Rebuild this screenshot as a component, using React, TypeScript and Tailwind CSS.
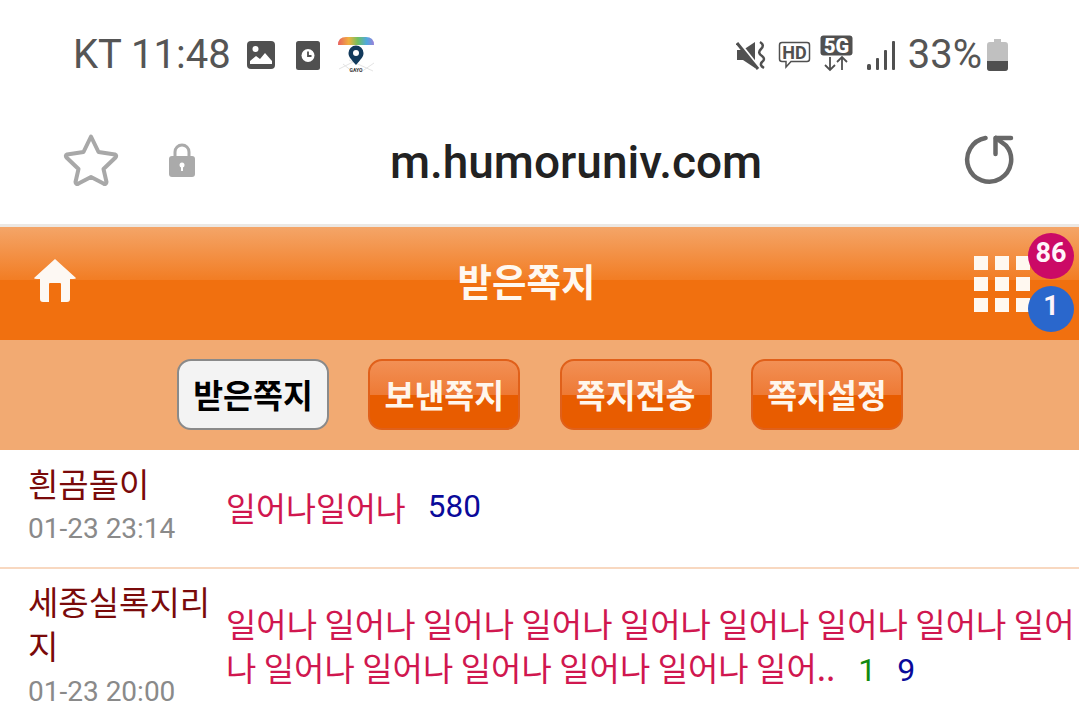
import React from 'react'

const tabs = ['받은쪽지', '보낸쪽지', '쪽지전송', '쪽지설정']

const GalleryIcon = () => (
  <svg width="30" height="30" viewBox="0 0 30 30" className="ml-[15px]">
    <rect x="1" y="1" width="28" height="28" rx="4" fill="#505050" />
    <circle cx="9.5" cy="9" r="3" fill="#fff" />
    <path d="M4 24 v-3 l6 -5 4 3 5 -6 7 8 v3 z" fill="#fff" />
  </svg>
)

const ClockIcon = () => (
  <svg width="26" height="31" viewBox="0 0 26 31" className="ml-[19px]">
    <rect x="1" y="1" width="24" height="29" rx="2.5" fill="#505050" />
    <circle cx="13" cy="15.5" r="6.5" fill="#fff" />
    <path d="M13 11.5 v4.5 h3.5" stroke="#505050" strokeWidth="1.8" fill="none" />
  </svg>
)

const GayoIcon = () => (
  <svg width="38" height="38" viewBox="0 0 38 38" className="ml-[16px]">
    <defs>
      <linearGradient id="rb" x1="0" x2="1" y1="0" y2="0">
        <stop offset="0" stopColor="#e8605f" />
        <stop offset="0.3" stopColor="#f0b040" />
        <stop offset="0.55" stopColor="#70c060" />
        <stop offset="0.8" stopColor="#50a8e0" />
        <stop offset="1" stopColor="#9a80d8" />
      </linearGradient>
    </defs>
    <path d="M1 9 Q1 1 9 1 H29 Q37 1 37 9 Z" fill="url(#rb)" />
    <path d="M2 33 L20 24 M12 24 L36 35 M6 28 L16 36 M24 36 L37 27" stroke="#e4e4e4" strokeWidth="1" fill="none" />
    <path d="M19 29 C14 23 11.5 21 11.5 17 A7.5 7.5 0 0 1 26.5 17 C26.5 21 24 23 19 29 Z" fill="#123a5c" />
    <circle cx="19" cy="17" r="3" fill="#fff" />
    <text x="19" y="36" textAnchor="middle" fontSize="5" fontWeight="700" fill="#333" fontFamily="Roboto, sans-serif">GAYO</text>
  </svg>
)

const MuteIcon = () => (
  <svg width="32" height="30" viewBox="0 0 32 30">
    <path d="M1 10 h6 l12 -8 v26 l-12 -8 h-6 z" fill="#505050" />
    <path d="M1 0 L24 29" stroke="#fff" strokeWidth="3" />
    <path d="M1 3 L22 29" stroke="#505050" strokeWidth="3" />
    <path d="M24 2 q5 3 1 7 q-4 4 1 7 q4 3 0 6 q-3 3 2 6" stroke="#505050" strokeWidth="2.5" fill="none" />
  </svg>
)

const HdIcon = () => (
  <svg width="33" height="28" viewBox="0 0 33 28" className="ml-[10px]">
    <path d="M4 1.5 H29 Q31.5 1.5 31.5 4 V18 Q31.5 20.5 29 20.5 H13 L8 26 V20.5 H4 Q1.5 20.5 1.5 18 V4 Q1.5 1.5 4 1.5 Z" fill="none" stroke="#505050" strokeWidth="1.5" />
    <text x="16.5" y="17.5" textAnchor="middle" fontSize="18" fontWeight="700" fill="#505050" fontFamily="Roboto, sans-serif">HD</text>
  </svg>
)

const FiveGIcon = () => (
  <svg width="33" height="37" viewBox="0 0 33 37" className="mb-[3px] ml-[9px]">
    <rect x="0.5" y="0.5" width="32" height="20" rx="3" fill="#505050" />
    <text x="16.5" y="17.5" textAnchor="middle" fontSize="20" fontWeight="900" fill="#fff" fontFamily="Roboto, sans-serif">5G</text>
    <path d="M10 22 V35 M5 30 L10 35 L15 30 M22 35 V22 M17 27 L22 22 L27 27" stroke="#505050" strokeWidth="1.8" fill="none" />
  </svg>
)

const SignalIcon = () => (
  <svg width="28" height="30" viewBox="0 0 28 30" className="ml-[14px]">
    <rect x="0" y="24" width="4" height="6" rx="1.5" fill="#505050" />
    <rect x="9" y="18" width="3" height="12" rx="1" fill="#505050" />
    <rect x="17" y="10" width="3" height="20" rx="1" fill="#505050" />
    <rect x="25" y="1" width="3" height="29" rx="1" fill="#505050" />
  </svg>
)

const BatteryIcon = () => (
  <svg width="21" height="32" viewBox="0 0 21 32" className="ml-[5px]">
    <path d="M7 0 h7 v3 h4 q3 0 3 3 v23 q0 3 -3 3 h-15 q-3 0 -3 -3 v-23 q0 -3 3 -3 h4 z" fill="#c0c0c0" />
    <path d="M0 22 h21 v7 q0 3 -3 3 h-15 q-3 0 -3 -3 z" fill="#505050" />
  </svg>
)

const StarIcon = () => (
  <svg width="56" height="54" viewBox="0 0 56 54">
    <path d="M28 3.5 L35.5 19 L52 21.5 C53.5 22 53.5 23.5 52.5 24.5 L40.5 36 L43.5 49 C43.5 51 42 51.5 40.5 50.5 L28 44 L15.5 50.5 C14 51.5 12.5 51 12.5 49 L15.5 36 L3.5 24.5 C2.5 23.5 2.5 22 4 21.5 L20.5 19 Z" fill="none" stroke="#a8a8a8" strokeWidth="4" strokeLinejoin="round" />
  </svg>
)

const LockIcon = () => (
  <svg width="28" height="36" viewBox="0 0 28 36" className="ml-[49px]">
    <path d="M7 16 V10 A7 7 0 0 1 21 10 V16" fill="none" stroke="#aaa" strokeWidth="3" />
    <rect x="1" y="14" width="26" height="21" rx="3" fill="#aaa" />
    <circle cx="14" cy="23" r="2.5" fill="#fff" />
    <rect x="13" y="23" width="2" height="6" fill="#fff" />
  </svg>
)

const ReloadIcon = () => (
  <svg width="52" height="52" viewBox="0 0 52 52">
    <path d="M21.5 4 A22 22 0 1 0 42 11.5 L32 4" fill="none" stroke="#686868" strokeWidth="4.5" strokeLinecap="round" strokeLinejoin="round" />
    <path d="M31.5 20 V4 H47" fill="none" stroke="#686868" strokeWidth="4.5" strokeLinecap="round" strokeLinejoin="round" />
  </svg>
)

const HomeIcon = () => (
  <svg width="42" height="44" viewBox="0 0 42 44" className="mb-[2px]">
    <path d="M21 0 L42 19 Q42 20 39 20 H36 V40 Q36 43 33 43 H27 V25 Q27 24 26 24 H16 Q15 24 15 25 V43 H9 Q6 43 6 40 V20 H3 Q0 20 0 19 Z" fill="#fdf8f3" />
  </svg>
)

const Badge = ({ value, className }: { value: string; className: string }) => (
  <div className={`absolute right-[5px] flex h-[46px] w-[46px] items-center justify-center rounded-full pb-[6px] font-['Roboto',sans-serif] text-[27px] leading-none font-bold text-[#fff4fa] ${className}`}>
    {value}
  </div>
)

const Tab = ({ label, active }: { label: string; active: boolean }) => (
  <div
    className={
      active
        ? 'flex h-[71px] w-[152px] items-center justify-center rounded-[14px] border-2 border-[#8a8a8a] bg-[#f3f3f3] text-[32.5px] font-bold text-black'
        : 'flex h-[71px] w-[152px] items-center justify-center rounded-[14px] border-2 border-[#e0601a] bg-[linear-gradient(#f29055,#ee7a35_50%,#e85c00_50%,#e85c00)] text-[32.5px] font-bold text-[#fff6ec]'
    }
  >
    {label}
  </div>
)

export default function App() {
  return (
    <div className="h-[723px] w-[1079px] overflow-hidden bg-white font-['Noto_Sans_CJK_KR',sans-serif]">
      <div className="flex h-[108px] items-center pt-[2px] pr-[71px] pl-[73px] font-['Roboto',sans-serif] text-[#555]">
        <span className="text-[40px] leading-none">KT 11:48</span>
        <GalleryIcon />
        <ClockIcon />
        <GayoIcon />
        <div className="flex-1" />
        <MuteIcon />
        <HdIcon />
        <FiveGIcon />
        <SignalIcon />
        <span className="ml-[13px] text-[40px] leading-none">33%</span>
        <BatteryIcon />
      </div>

      <div className="relative flex h-[116px] items-center px-[63px] pb-[12px]">
        <StarIcon />
        <LockIcon />
        <div className="flex-1 pt-[4px] pr-[8px] text-center font-['Roboto',sans-serif] text-[46px] leading-none font-medium text-[#222]">m.humoruniv.com</div>
        <ReloadIcon />
      </div>
      <div className="h-[3px] bg-[#ece8e4]" />

      <div className="relative flex h-[113px] items-center bg-[linear-gradient(#f4a568,#f27d24_47%,#f1700f_47%,#f1700f)] pl-[34px] pb-[3px]">
        <HomeIcon />
        <div className="mb-[4px] flex-1 pl-[3px] text-center text-[37.5px] font-bold text-[#fff8f0]">받은쪽지</div>
        <div className="mt-[3px] mr-[49px] grid grid-cols-3 gap-[7px]">
          {Array.from({ length: 9 }).map((_, i) => (
            <div key={i} className="h-[14px] w-[14px] bg-[#fff8f0]" />
          ))}
        </div>
        <Badge value="86" className="top-[6px] bg-[#cb0a66]" />
        <Badge value="1" className="top-[59px] bg-[#2a67cc]" />
      </div>

      <div className="flex h-[110px] items-center justify-center gap-[39.33px] bg-[#f2aa72] pb-[2px] pl-[1px]">
        {tabs.map((t, i) => (
          <Tab key={t} label={t} active={i === 0} />
        ))}
      </div>

      <div className="flex h-[117px] pl-[28px]">
        <div className="w-[198px] pt-[11px]">
          <div className="text-[33px] leading-[44px] text-[#7a0a0a]">흰곰돌이</div>
          <div className="font-['Roboto',sans-serif] text-[28px] leading-[48px] text-[#8a8a8a]">01-23 23:14</div>
        </div>
        <div className="flex flex-1 items-center pb-[3px] text-[32.6px] text-[#d0174f]">
          일어나일어나
          <span className="ml-[22px] font-['Roboto',sans-serif] text-[31.5px] text-[#0a0a9a]">580</span>
        </div>
      </div>
      <div className="h-[2px] bg-[#f8d8c0]" />

      <div className="flex pl-[28px]">
        <div className="w-[198px] pt-[10px]">
          <div className="text-[33px] leading-[44px] text-[#7a0a0a]">세종실록지리<br />지</div>
          <div className="font-['Roboto',sans-serif] text-[28px] leading-[50px] text-[#8a8a8a]">01-23 20:00</div>
        </div>
        <div className="flex-1 pt-[32px] text-[33px] leading-[44px] text-[#d0174f]">
          <div className="whitespace-nowrap">일어나 일어나 일어나 일어나 일어나 일어나 일어나 일어나 일어</div>
          <div className="whitespace-nowrap">
            나 일어나 일어나 일어나 일어나 일어나 일어..
            <span className="ml-[23px] font-['Roboto',sans-serif] text-[32px] text-[#118a11]">1</span>
            <span className="ml-[21px] font-['Roboto',sans-serif] text-[32px] text-[#0a0a9a]">9</span>
          </div>
        </div>
      </div>
    </div>
  )
}
